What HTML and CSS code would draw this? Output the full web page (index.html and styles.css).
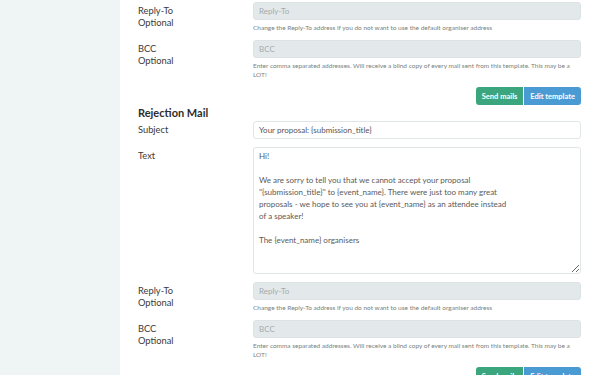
FILE: index.html
```html
<!DOCTYPE html>
<html lang="en">
<head>
    <meta charset="UTF-8">
    <title>Mail templates</title>
    <link rel="stylesheet" href="styles.css">
</head>
<body>
    <aside class="sidebar"></aside>

    <main class="content">
        <!-- 前のテンプレートの続き -->
        <div class="form-row">
            <div class="label">Reply-To<br>Optional</div>
            <div class="field">
                <input class="form-input disabled" placeholder="Reply-To" disabled>
                <div class="help">Change the Reply-To address if you do not want to use the default organiser address</div>
            </div>
        </div>
        <div class="form-row">
            <div class="label">BCC<br>Optional</div>
            <div class="field">
                <input class="form-input disabled" placeholder="BCC" disabled>
                <div class="help">Enter comma separated addresses. Will receive a blind copy of every mail sent from this template. This may be a LOT!</div>
            </div>
        </div>
        <div class="actions">
            <a class="btn btn-send">Send mails</a>
            <a class="btn btn-edit">Edit template</a>
        </div>

        <h3 class="mail-title">Rejection Mail</h3>
        <div class="form-row">
            <div class="label">Subject</div>
            <div class="field">
                <input class="form-input" value="Your proposal: {submission_title}">
            </div>
        </div>
        <div class="form-row row-text">
            <div class="label">Text</div>
            <div class="field">
                <textarea class="form-text">Hi!

We are sorry to tell you that we cannot accept your proposal
"{submission_title}" to {event_name}. There were just too many great
proposals - we hope to see you at {event_name} as an attendee instead
of a speaker!

The {event_name} organisers</textarea>
            </div>
        </div>
        <div class="form-row">
            <div class="label">Reply-To<br>Optional</div>
            <div class="field">
                <input class="form-input disabled" placeholder="Reply-To" disabled>
                <div class="help">Change the Reply-To address if you do not want to use the default organiser address</div>
            </div>
        </div>
        <div class="form-row">
            <div class="label">BCC<br>Optional</div>
            <div class="field">
                <input class="form-input disabled" placeholder="BCC" disabled>
                <div class="help">Enter comma separated addresses. Will receive a blind copy of every mail sent from this template. This may be a LOT!</div>
            </div>
        </div>
        <div class="actions">
            <a class="btn btn-send">Send mails</a>
            <a class="btn btn-edit">Edit template</a>
        </div>
    </main>
</body>
</html>
```

FILE: styles.css
```css
/* 基本 */
body {
    margin: 0;
    display: flex;
    min-height: 100vh;
    font-family: 'Lato', 'Noto Sans', sans-serif;
    color: #3a3a3a;
    background-color: #ffffff;
}

/* サイドバー */
.sidebar {
    width: 120px;
    flex-shrink: 0;
    background-color: #eff4f4;
}

/* 本文 */
.content {
    flex: 1;
    padding: 2px 19px 0 18px;
}

/* フォーム行 */
.form-row {
    display: grid;
    grid-template-columns: 115px 1fr;
    margin-bottom: 8px;
}
.label {
    padding-top: 3px;
    font-size: 9.3px;
    line-height: 12px;
    color: #3a3a3a;
}

/* 入力 */
.form-input {
    display: block;
    width: 100%;
    height: 18px;
    box-sizing: border-box;
    margin: 0;
    padding: 0 5px;
    border: 1px solid #e0e5e6;
    border-radius: 3px;
    font-family: 'Lato', 'Noto Sans', sans-serif;
    font-size: 8px;
    color: #555;
    background-color: #ffffff;
}
.form-input.disabled {
    background-color: #e3e9ea;
    border-color: #dde3e4;
}
.form-input::placeholder {
    color: #a4acad;
}
.form-text {
    display: block;
    width: 100%;
    height: 127px;
    box-sizing: border-box;
    margin: 0;
    padding: 2px 5px;
    border: 1px solid #e0e5e6;
    border-radius: 3px;
    font-family: 'Lato', 'Noto Sans', sans-serif;
    font-size: 8px;
    line-height: 12px;
    color: #5a5a5a;
    resize: vertical;
}

/* ヘルプテキスト */
.help {
    margin-top: 3px;
    font-size: 6.5px;
    line-height: 9px;
    color: #7a7f80;
}

/* ボタン */
.actions {
    display: flex;
    justify-content: flex-end;
}
.btn {
    display: flex;
    align-items: center;
    height: 18px;
    padding: 0 6px;
    font-size: 7.5px;
    font-weight: 700;
    color: #ffffff;
}
.btn-send {
    background-color: #3ba67d;
    border-radius: 3px 0 0 3px;
}
.btn-edit {
    background-color: #4a9bd3;
    border-radius: 0 3px 3px 0;
    margin-left: 1px;
}

/* 見出し */
.mail-title {
    margin: 0 0 1px;
    font-size: 11px;
    line-height: 15px;
    font-weight: 700;
    color: #2d2d2d;
}
```
